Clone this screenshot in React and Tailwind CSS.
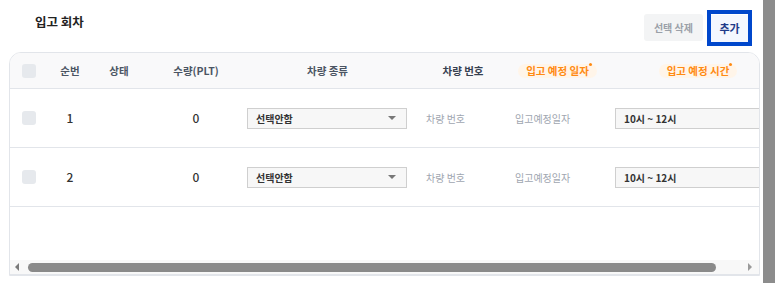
import { useState } from "react";

const FONT = { fontFamily: '"Noto Sans CJK KR", "Noto Sans", sans-serif' };

// 열 너비 (px)
const cols = {
  check: "w-[36px]",
  no: "w-[48px]",
  status: "w-[50px]",
  qty: "w-[96px]",
  type: "w-[175px]",
  plate: "w-[96px]",
  date: "w-[93px]",
  time: "w-[188px]",
};

const RequiredPill = ({ children }) => (
  <span className="relative inline-flex items-center h-[14px] px-[8px] rounded-full bg-[#fff5e9] text-[10.5px] font-bold text-[#ff8a12] leading-none">
    {children}
    <span className="absolute right-[5px] top-[-1px] w-[3px] h-[3px] rounded-full bg-[#ff8a12]" />
  </span>
);

const Select = ({ value, width }) => (
  <div className={`flex items-center justify-between h-[21px] ${width} border border-[#cfcfcf] bg-[#f7f7f7] pl-[8px] pr-[10px]`}>
    <span className="text-[10px] font-semibold text-[#333]">{value}</span>
    <span className="w-0 h-0 border-l-[4px] border-r-[4px] border-t-[4px] border-l-transparent border-r-transparent border-t-[#777]" />
  </div>
);

const App = () => {
  const [rows] = useState([
    { no: 1, qty: 0, type: "선택안함", time: "10시 ~ 12시" },
    { no: 2, qty: 0, type: "선택안함", time: "10시 ~ 12시" },
  ]);

  return (
    <div className="flex w-[775px] h-[283px] bg-white overflow-hidden" style={FONT}>
      <div className="w-[763px] pl-[9px] pr-[3px]">
        {/* 상단 */}
        <div className="flex items-start h-[52px]">
          <h2 className="mt-[13px] ml-[26px] text-[12.5px] font-bold text-[#222]">입고 회차</h2>
          <div className="ml-auto mr-[8px] mt-[10px] flex items-center gap-[4px]">
            <button className="h-[27px] px-[10px] rounded-[3px] bg-[#f3f4f5] text-[10px] font-semibold text-[#9aa0a8]">
              선택 삭제
            </button>
            <div className="border-4 border-[#0047cc]">
              <button className="h-[27px] w-[37px] bg-[#f4f7ff] text-[11px] font-semibold text-[#1e3a8a]">
                추가
              </button>
            </div>
          </div>
        </div>

        {/* 테이블 */}
        <div className="h-[224px] border border-[#e2e5ea] rounded-t-[12px] overflow-hidden flex flex-col">
          <div className="flex-1 overflow-hidden">
            <div className="w-[782px]">
              {/* 헤더 */}
              <div className="flex items-center h-[36px] bg-[#f9f9fa] border-b border-[#e2e5ea] text-[10.5px] font-semibold text-[#4b5563]">
                <div className={`${cols.check} flex justify-center pl-[1px]`}>
                  <span className="w-[14px] h-[14px] rounded-[3px] bg-[#e6e9ed]" />
                </div>
                <div className={`${cols.no} text-center`}>순번</div>
                <div className={`${cols.status} text-center`}>상태</div>
                <div className={`${cols.qty} text-center pl-[8px]`}>수량(PLT)</div>
                <div className={`${cols.type} text-center`}>차량 종류</div>
                <div className={`${cols.plate} text-center text-[#374151]`}>차량 번호</div>
                <div className={`${cols.date} text-center`}>
                  <RequiredPill>입고 예정 일자</RequiredPill>
                </div>
                <div className={`${cols.time} text-center`}>
                  <RequiredPill>입고 예정 시간</RequiredPill>
                </div>
              </div>

              {/* 행 */}
              {rows.map((row) => (
                <div key={row.no} className="flex items-center h-[59px] border-b border-[#e2e5ea]">
                  <div className={`${cols.check} flex justify-center pl-[1px]`}>
                    <span className="w-[14px] h-[14px] rounded-[3px] bg-[#e6e9ed]" />
                  </div>
                  <div className={`${cols.no} text-center text-[12px] font-medium text-[#333]`}>{row.no}</div>
                  <div className={`${cols.status}`} />
                  <div className={`${cols.qty} text-center pl-[8px] text-[12px] font-medium text-[#333]`}>{row.qty}</div>
                  <div className={`${cols.type} pl-[7px]`}>
                    <Select value={row.type} width="w-[160px]" />
                  </div>
                  <div className={`${cols.plate} pl-[11px] text-[10px] text-[#a0a6b0]`}>차량 번호</div>
                  <div className={`${cols.date} pl-[4px] text-[10px] text-[#a0a6b0]`}>입고예정일자</div>
                  <div className={`${cols.time} pl-[11px]`}>
                    <div className="flex items-center h-[21px] w-[170px] border border-[#cfcfcf] bg-[#f7f7f7] pl-[8px]">
                      <span className="text-[10px] font-semibold text-[#333]">{row.time}</span>
                    </div>
                  </div>
                </div>
              ))}
            </div>
          </div>

          {/* 가로 스크롤바 */}
          <div className="flex items-center h-[15px] bg-[#f8f8f8] border-b border-[#e2e5ea] px-[5px]">
            <span className="w-0 h-0 border-t-[4px] border-b-[4px] border-r-[4px] border-t-transparent border-b-transparent border-r-[#7a7a7a]" />
            <div className="ml-[9px] w-[688px] h-[9px] rounded-full bg-[#8a8a8a]" />
            <span className="ml-auto mr-[2px] w-0 h-0 border-t-[4px] border-b-[4px] border-l-[4px] border-t-transparent border-b-transparent border-l-[#9a9a9a]" />
          </div>
        </div>
      </div>

      {/* 세로 스크롤바 */}
      <div className="w-[12px] h-full bg-[#8c8c8c]" />
    </div>
  );
};

export default App;
